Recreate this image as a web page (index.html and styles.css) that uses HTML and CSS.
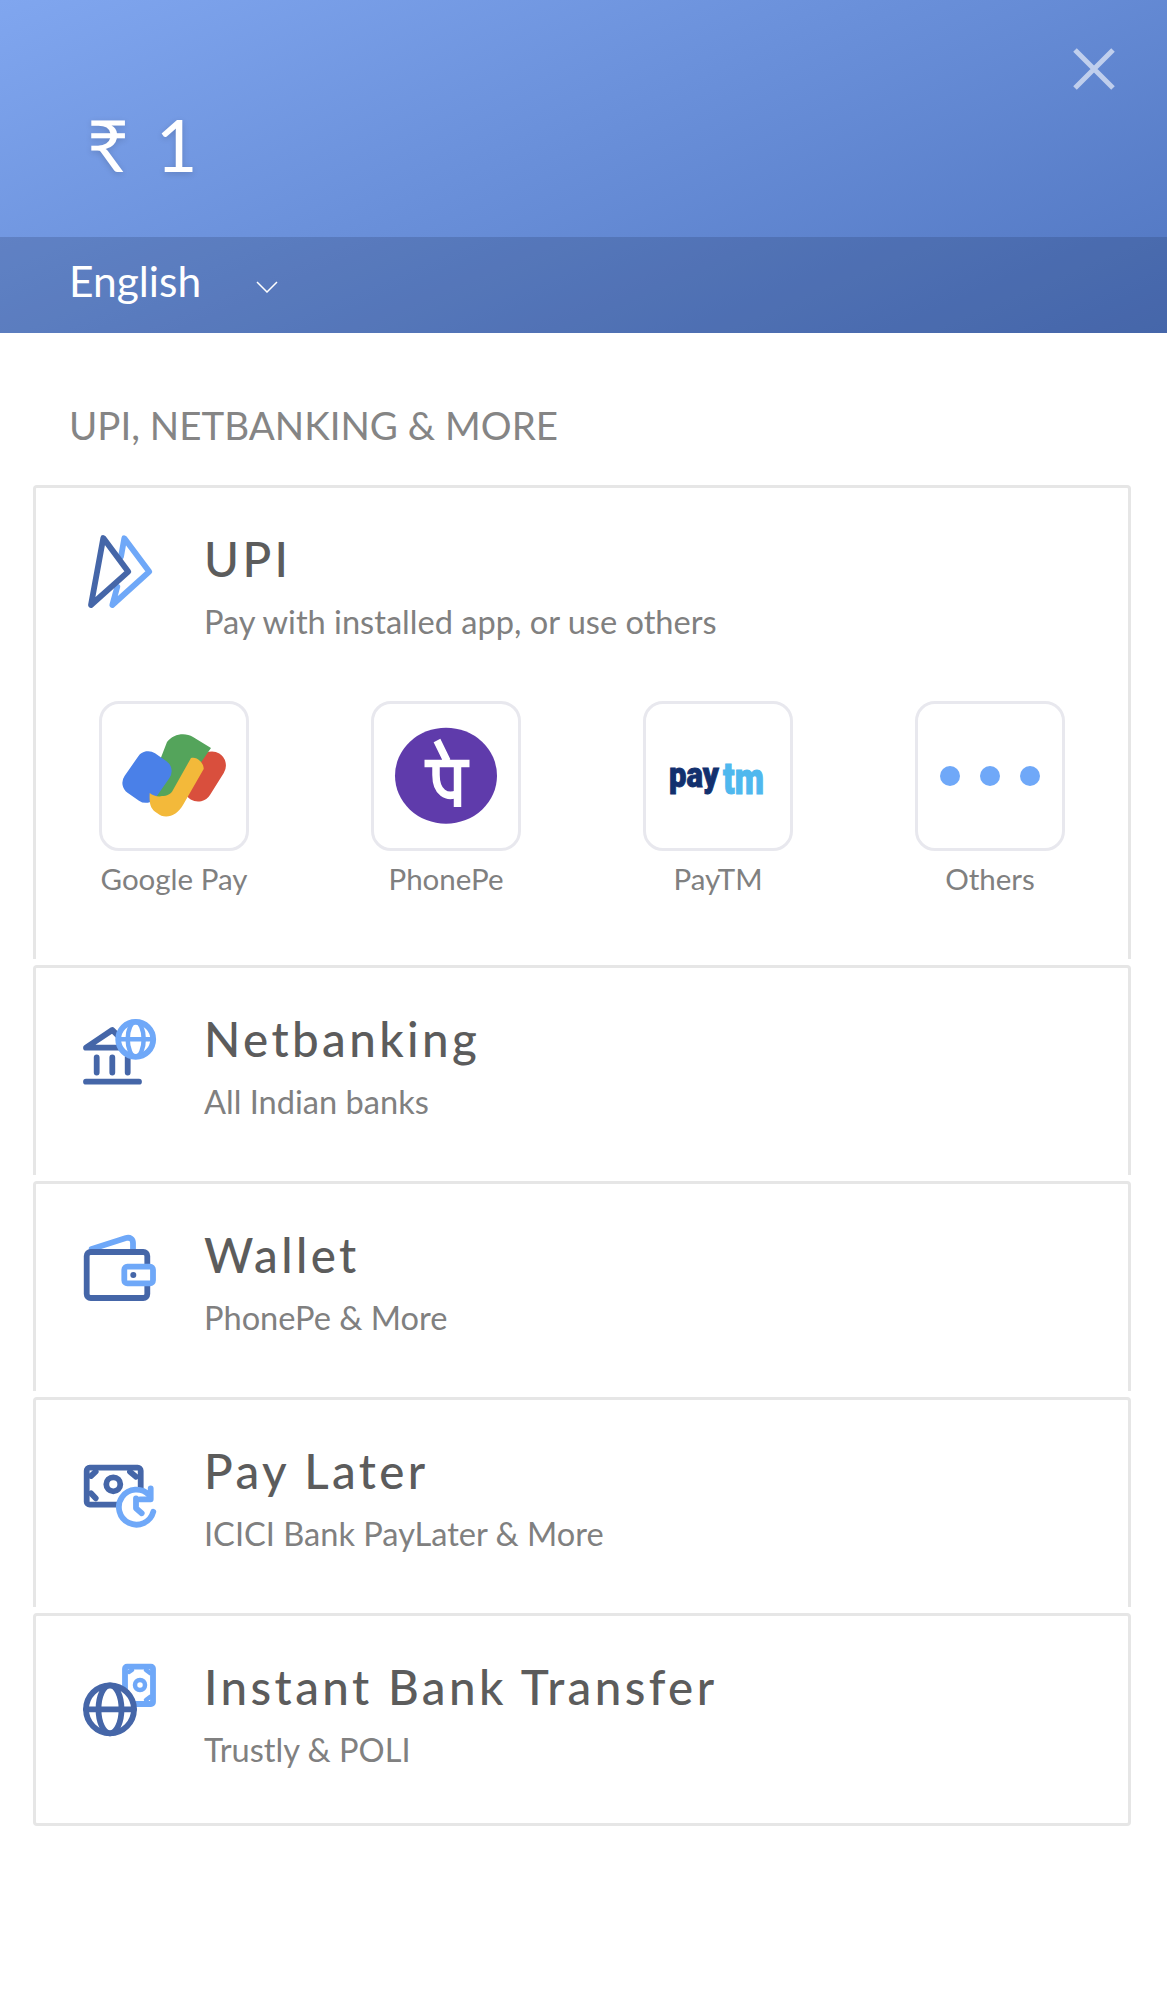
FILE: index.html
```html
<!DOCTYPE html>
<html lang="en">
<head>
    <meta charset="UTF-8">
    <meta name="viewport" content="width=device-width, initial-scale=1.0">
    <title>Payment Options</title>
    <link rel="stylesheet" href="styles.css">
</head>
<body>
    <header class="header">
        <div class="header-top">
            <div class="amount"><span>₹</span><span>1</span></div>
            <svg class="close" viewBox="0 0 42 42"><path d="M2 2 L40 40 M40 2 L2 40"/></svg>
        </div>
        <div class="lang-bar">
            <span class="lang">English</span>
            <svg class="chevron" viewBox="0 0 22 12"><path d="M1 1 L11 11 L21 1"/></svg>
        </div>
    </header>

    <main class="content">
        <h2 class="section-title">UPI, NETBANKING &amp; MORE</h2>

        <div class="methods">
            <!-- UPI has the app row underneath -->
            <section class="method method-upi">
                <div class="method-head">
                    <svg class="method-icon" viewBox="0 0 80 80">
                        <path class="light" d="M41 26.7 L44.3 8.3 L69.3 41.7 L32.3 75 L37.3 56.7"/>
                        <path class="dark" d="M23.3 8 L48.3 41.7 L11 75 Z"/>
                    </svg>
                    <div class="method-text">
                        <div class="method-name">UPI</div>
                        <div class="method-desc">Pay with installed app, or use others</div>
                    </div>
                </div>
                <div class="apps">
                    <div class="app">
                        <div class="app-tile">
                            <svg class="app-logo gpay" viewBox="0 0 149 149">
                                <rect x="92" y="48.5" width="28" height="54" rx="14" transform="rotate(32 106 75.5)" fill="#d94f3d"/>
                                <path d="M68 41 C74 33 86 31 94 36 L112 47 L78 96 L56 96 C52 92 52 80 56 72 Z" fill="#54a45b"/>
                                <rect x="29" y="52" width="38" height="48" rx="12" transform="rotate(35 48 76)" fill="#4a80e8"/>
                                <path d="M92 57 C98 55 105 62 104.7 68 L84 104 C78 115 66 119 58 112 C52 108 50 104 50.7 92 C54 95 60 96 63 95 C68 95 72 93 74 89 Z" fill="#f3b93a"/>
                            </svg>
                        </div>
                        <div class="app-name">Google Pay</div>
                    </div>
                    <div class="app">
                        <div class="app-tile">
                            <svg class="app-logo" viewBox="0 0 149 149">
                                <ellipse cx="75" cy="74.7" rx="51" ry="48" fill="#5f3bab"/>
                                <path d="M53.5 62.5 H98.5 M66 39.5 L76 60 M86.5 62 V106" fill="none" stroke="#fff" stroke-width="7.5"/>
                                <path d="M65 62 V74 C65 92 76 97 86 93" fill="none" stroke="#fff" stroke-width="7.5"/>
                            </svg>
                        </div>
                        <div class="app-name">PhonePe</div>
                    </div>
                    <div class="app">
                        <div class="app-tile">
                            <svg class="app-logo" viewBox="0 0 149 149">
                                <text class="paytm paytm-pay" transform="translate(26 86) scale(1 1.15)">pay</text>
                                <text class="paytm paytm-tm" transform="translate(80 93) scale(1 1.3)">tm</text>
                            </svg>
                        </div>
                        <div class="app-name">PayTM</div>
                    </div>
                    <div class="app">
                        <div class="app-tile dots">
                            <span class="dot"></span><span class="dot"></span><span class="dot"></span>
                        </div>
                        <div class="app-name">Others</div>
                    </div>
                </div>
            </section>

            <section class="method">
                <div class="method-head">
                    <svg class="method-icon" viewBox="0 0 80 80">
                        <path class="dark" d="M6 37.7 L32.3 20 L50 37.7 Z"/>
                        <path class="dark" d="M16.7 47.5 V62.5 M32.3 47.5 V62.5 M47.7 47.5 V62.5 M6 71.7 H59"/>
                        <circle class="light filled" cx="55.7" cy="29.3" r="17.5"/>
                        <ellipse class="light thin" cx="55.7" cy="29.3" rx="8" ry="17.5"/>
                        <path class="light thin" d="M38.5 29.3 H73"/>
                    </svg>
                    <div class="method-text">
                        <div class="method-name">Netbanking</div>
                        <div class="method-desc">All Indian banks</div>
                    </div>
                </div>
            </section>

            <section class="method">
                <div class="method-head">
                    <svg class="method-icon" viewBox="0 0 80 80">
                        <path class="light" d="M11.7 23 L46 12 C50 11 53 13 53 17 V24"/>
                        <rect class="dark" x="6.7" y="26" width="60.6" height="46" rx="4"/>
                        <rect class="light filled" x="44.3" y="40.7" width="28.7" height="16.6" rx="3"/>
                        <circle class="dot-dark" cx="53.3" cy="49" r="3"/>
                    </svg>
                    <div class="method-text">
                        <div class="method-name">Wallet</div>
                        <div class="method-desc">PhonePe &amp; More</div>
                    </div>
                </div>
            </section>

            <section class="method">
                <div class="method-head">
                    <svg class="method-icon" viewBox="0 0 80 80">
                        <rect class="dark" x="6.7" y="25.7" width="54" height="37" rx="3"/>
                        <circle class="dark" cx="33.3" cy="42.3" r="7"/>
                        <path class="dark" d="M11 34 L15.7 29.7 M50 29.7 L56 34.7 M11 51.3 L15.7 56.3"/>
                        <circle class="white-disc" cx="56" cy="64.7" r="19"/>
                        <path class="light" d="M73.3 69.7 A17.5 17.5 0 1 1 69 53"/>
                        <path class="light" d="M70.7 46.3 V57.3 H60 M56 56.3 V66.3 L61.7 71.3"/>
                    </svg>
                    <div class="method-text">
                        <div class="method-name">Pay Later</div>
                        <div class="method-desc">ICICI Bank PayLater &amp; More</div>
                    </div>
                </div>
            </section>

            <section class="method method-last">
                <div class="method-head">
                    <svg class="method-icon" viewBox="0 0 80 80">
                        <rect class="light" x="45" y="8.7" width="28" height="37.3" rx="2"/>
                        <circle class="light thin" cx="60" cy="27" r="5"/>
                        <path class="light thin" d="M49 14 L52 12 M66 12 L70 15 M66 42 L70 39"/>
                        <circle class="dark filled" cx="30" cy="51.3" r="24"/>
                        <ellipse class="dark" cx="30" cy="51.3" rx="11.5" ry="24"/>
                        <path class="dark" d="M6 51.3 H54"/>
                    </svg>
                    <div class="method-text">
                        <div class="method-name">Instant Bank Transfer</div>
                        <div class="method-desc">Trustly &amp; POLI</div>
                    </div>
                </div>
            </section>
        </div>
    </main>
</body>
</html>
```

FILE: styles.css
```css
html, body {
    margin: 0;
    padding: 0;
}

body {
    font-family: Lato, "Open Sans", sans-serif;
    background-color: #fff;
    color: #5a5a5a;
}

.header {
    background: linear-gradient(157deg, #80a6ef 0%, #6a90da 45%, #5075c0 100%);
}

.header-top {
    height: 237px;
    display: flex;
    justify-content: space-between;
    box-sizing: border-box;
    padding: 48px 52px 0 87px;
}

.amount {
    display: flex;
    gap: 27px;
    margin-top: 53px;
    font-size: 72px;
    font-weight: 400;
    line-height: 86px;
    color: #fff;
    text-shadow: 0 2px 6px rgba(0,0,0,0.15);
}

.close {
    width: 42px;
    height: 42px;
}

.close path {
    fill: none;
    stroke: rgba(255,255,255,0.6);
    stroke-width: 5;
}

.lang-bar {
    height: 96px;
    box-sizing: border-box;
    display: flex;
    align-items: center;
    padding: 0 0 10px 69px;
    background-color: rgba(30,50,90,0.22);
}

.lang {
    font-size: 42.5px;
    font-weight: 400;
    color: #fff;
}

.chevron {
    width: 22px;
    height: 12px;
    margin: 13px 0 0 55px;
}

.chevron path {
    fill: none;
    stroke: #fff;
    stroke-width: 1.5;
}

.content {
    padding: 0 36px 0 33px;
}

.section-title {
    margin: 0;
    padding: 65px 0 32px 36px;
    font-size: 38.5px;
    line-height: 55px;
    font-weight: 400;
    color: #858585;
}

.methods {
    display: flex;
    flex-direction: column;
    gap: 6px;
}

.method {
    height: 210px;
    box-sizing: border-box;
    border: 3px solid #e6e6e6;
    border-bottom: none;
    border-radius: 4px 4px 0 0;
    padding: 42px 0 0 44px;
}

.method-upi {
    height: 474px;
}

.method-last {
    height: 213px;
    border-bottom: 3px solid #e6e6e6;
    border-radius: 4px;
}

.method-head {
    display: flex;
    gap: 44px;
}

.method-icon {
    width: 80px;
    height: 80px;
    flex-shrink: 0;
    overflow: visible;
}

.method-icon .dark,
.method-icon .light {
    fill: none;
    stroke-width: 5.8;
    stroke-linecap: round;
    stroke-linejoin: round;
}

.method-icon .dark {
    stroke: #4566a8;
}

.method-icon .light {
    stroke: #6fa8f8;
}

.method-icon .thin {
    stroke-width: 4.5;
}

.method-icon .filled {
    fill: #fff;
}

.method-icon .white-disc {
    fill: #fff;
}

.method-icon .dot-dark {
    fill: #4566a8;
}

.method-text {
    margin-top: 1px;
}

.method-name {
    font-size: 47.5px;
    font-weight: 500;
    line-height: 56px;
    letter-spacing: 3.4px;
    color: #5c5c5c;
}

.method-desc {
    font-size: 32.6px;
    line-height: 48px;
    margin-top: 11px;
    color: #808080;
}

.apps {
    display: flex;
    justify-content: space-between;
    width: 966px;
    margin-top: 55px;
    margin-left: 19px;
}

.app {
    width: 150px;
}

.app-tile {
    width: 150px;
    height: 150px;
    box-sizing: border-box;
    border: 3px solid #e8e8ee;
    border-radius: 20px;
    overflow: hidden;
}

.app-logo {
    display: block;
    width: 149px;
    height: 149px;
    margin: -3px;
}

.gpay {
    filter: blur(0.7px);
}

.paytm {
    font-family: Roboto, sans-serif;
    font-weight: 900;
    stroke-width: 0.8;
}

.paytm-pay {
    font-size: 31px;
    fill: #12306e;
    stroke: #12306e;
}

.paytm-tm {
    font-size: 34px;
    fill: #4fb8ee;
    stroke: #4fb8ee;
}

.dots {
    display: flex;
    align-items: center;
    justify-content: center;
    gap: 20px;
}

.dot {
    width: 20px;
    height: 20px;
    border-radius: 50%;
    background-color: #6fa8f8;
}

.app-name {
    margin: 8px -20px 0;
    font-size: 29.5px;
    line-height: 40px;
    text-align: center;
    color: #808080;
}
```
